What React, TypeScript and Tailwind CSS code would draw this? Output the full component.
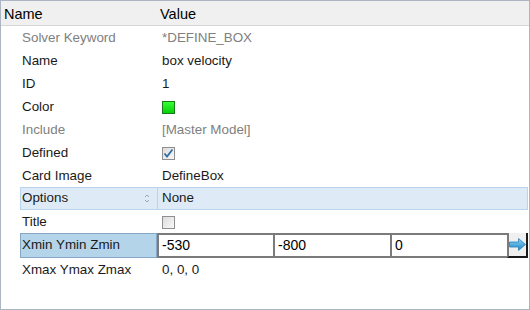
import React from 'react'

const font = "font-['Liberation_Sans',Arial,sans-serif]"

function Checkbox({ checked }: { checked?: boolean }) {
  return (
    <span className="w-[13px] h-[13px] border border-[#8f8f8f] bg-gradient-to-br from-[#dcdcdc] to-[#f8f8f8] flex items-center justify-center">
      {checked && (
        <svg width="11" height="11" viewBox="0 0 11 11">
          <path d="M1.5 5.5 L4 8.5 L9.5 1.5" fill="none" stroke="#2f6fa3" strokeWidth="1.8" />
        </svg>
      )}
    </span>
  )
}

function Row({ label, children, muted }: { label: string; children?: React.ReactNode; muted?: boolean }) {
  return (
    <div className="h-[23px] pt-[1px] flex items-center text-[13.4px]">
      <div className={`w-[156px] pl-[21px] ${muted ? 'text-[#808080]' : 'text-[#1a1a1a]'}`}>{label}</div>
      <div className={`pl-[5px] flex items-center ${muted ? 'text-[#808080]' : 'text-[#1a1a1a]'}`}>{children}</div>
    </div>
  )
}

function Field({ value, w }: { value: string; w: string }) {
  return (
    <div className={`${w} h-[25px] bg-white border-2 border-[#7b7b7b] border-r-0 flex items-center pl-[3px] text-[14px] text-black`}>
      {value}
    </div>
  )
}

export default function App() {
  return (
    <div className={`w-[530px] h-[310px] bg-white border border-[#abb6c2] overflow-hidden ${font}`}>
      <div className="h-[25px] pt-[3px] bg-[#f0f0f0] border-b border-[#d6d6d6] flex items-center text-[14.5px] text-black">
        <div className="w-[156px] pl-[3px]">Name</div>
        <div className="pl-[3px]">Value</div>
      </div>

      <Row label="Solver Keyword" muted>*DEFINE_BOX</Row>
      <Row label="Name">box velocity</Row>
      <Row label="ID">1</Row>
      <Row label="Color">
        <span className="w-[13px] h-[13px] border border-[#1a7a1a] bg-gradient-to-b from-[#33ff33] to-[#00d000]" />
      </Row>
      <Row label="Include" muted>[Master Model]</Row>
      <Row label="Defined">
        <Checkbox checked />
      </Row>
      <Row label="Card Image">DefineBox</Row>

      <div className="h-[23px] ml-[19px] mr-[1px] flex bg-[#deebf7] border border-[#b9d4ee] text-[13.4px] text-[#1a1a1a]">
        <div className="w-[137px] border-r border-[#b9d4ee] flex items-center justify-between pl-[1px] pr-[7px]">
          <span>Options</span>
          <svg width="6" height="9" viewBox="0 0 6 9">
            <path d="M1 3 L3 1 L5 3 M1 6 L3 8 L5 6" fill="none" stroke="#9aa6b2" strokeWidth="1" />
          </svg>
        </div>
        <div className="flex items-center pl-[4px]">None</div>
      </div>

      <Row label="Title">
        <Checkbox />
      </Row>

      <div className="h-[25px] ml-[19px] mr-[1px] flex">
        <div className="w-[137px] bg-[#b4d4ea] border border-[#85a8c6] flex items-center pl-[1px] text-[13.4px] text-[#1a1a1a]">
          Xmin Ymin Zmin
        </div>
        <Field value="-530" w="w-[116px]" />
        <Field value="-800" w="w-[117px]" />
        <Field value="0" w="w-[117px]" />
        <div className="flex-1 h-[25px] bg-[#f0f0f0] border-l-2 border-[#7b7b7b] border-r-2 border-r-[#1a1a1a] border-b-2 border-b-[#1a1a1a] flex items-center justify-center">
          <svg width="17" height="13" viewBox="0 0 17 13">
            <defs>
              <linearGradient id="arr" x1="0" y1="0" x2="0" y2="1">
                <stop offset="0" stopColor="#8fd6f5" />
                <stop offset="1" stopColor="#1a86c8" />
              </linearGradient>
            </defs>
            <path d="M0.5 4 H9.5 V0.5 L16.5 6.5 L9.5 12.5 V9 H0.5 Z" fill="url(#arr)" stroke="#2a7fb8" strokeWidth="0.8" />
          </svg>
        </div>
      </div>

      <Row label="Xmax Ymax Zmax">0, 0, 0</Row>
    </div>
  )
}
